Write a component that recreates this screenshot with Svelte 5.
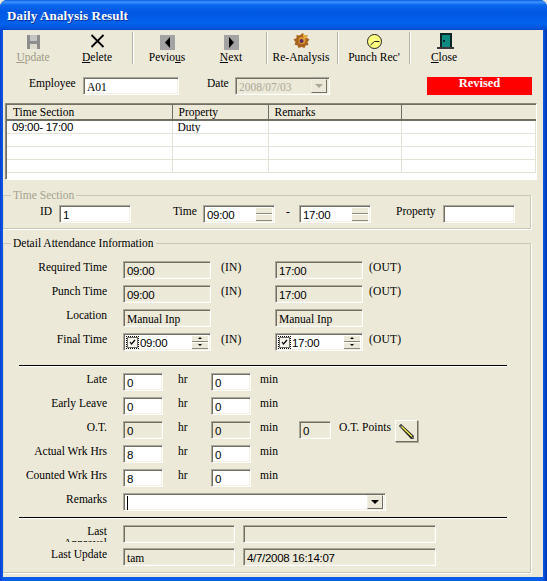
<script>
  const tools = [
    { id: 'save', pre: '', key: 'U', post: 'pdate', off: true },
    { id: 'x', pre: '', key: 'D', post: 'elete' },
    { sep: true },
    { id: 'prev', pre: 'Pevio', key: 'u', post: 's' },
    { id: 'next', pre: '', key: 'N', post: 'ext' },
    { sep: true },
    { id: 'gear', pre: 'Re-Analysis', key: '', post: '' },
    { sep: true, wide: true },
    { id: 'clock', pre: "Punch Rec'", key: '', post: '' },
    { sep: true },
    { id: 'door', pre: '', key: 'C', post: 'lose' }
  ];

  const timeRows = [
    { label: 'Required Time', a: '09:00', b: '17:00', tags: true },
    { label: 'Punch Time', a: '09:00', b: '17:00', tags: true },
    { label: 'Location', a: 'Manual Inp', b: 'Manual Inp', tags: false }
  ];

  const hourRows = [
    { label: 'Late', hr: '0', min: '0' },
    { label: 'Early Leave', hr: '0', min: '0' },
    { label: 'O.T.', hr: '0', min: '0', off: true },
    { label: 'Actual Wrk Hrs', hr: '8', min: '0' },
    { label: 'Counted Wrk Hrs', hr: '8', min: '0' }
  ];
</script>

<div class="window">
  <div class="title">Daily Analysis Result</div>

  <div class="client">
    <div class="toolbar">
      {#each tools as t}
        {#if t.sep}
          <div class="tsep" class:wide={t.wide}></div>
        {:else}
          <div class="tool" class:off={t.off}>
            <svg width="20" height="18" viewBox="0 0 20 18">
              {#if t.id === 'save'}
                <path d="M4 3h13v14H4z" fill="#8e8e8e" />
                <path d="M7 3h7v6H7z" fill="#c4c4c4" />
                <path d="M7 12h7v5H7z" fill="#dedcd0" />
              {:else if t.id === 'x'}
                <path d="M4.500 3l12 12M16.500 3l-12 12" stroke="#000" stroke-width="1.800" fill="none" />
              {:else if t.id === 'prev'}
                <path d="M3 3h15v15H3z" fill="#a3a3a3" />
                <path d="M13 5v11L8 10.500z" fill="#000" />
              {:else if t.id === 'next'}
                <path d="M3 3h15v15H3z" fill="#a3a3a3" />
                <path d="M8 5v11l5-5.500z" fill="#000" />
              {:else if t.id === 'gear'}
                <path d="M12 1l1.500 2.500 3-.5-.5 3 2.500 1.500-2 2.500 1 3-3 .5-1 2.500-3-1-3 1-1-2.500-3-1 1-2.500-2-2.500 3-1.500 0-3 3 .5z" fill="#a8641e" />
                <path d="M12 1l1.500 2.500 3-.5-.5 3-2.500 1-1.500-3z" fill="#e8b040" />
                <circle cx="11" cy="8.500" r="3.500" fill="#e09a30" />
                <circle cx="10.500" cy="9" r="2" fill="#5a2a68" />
              {:else if t.id === 'clock'}
                <circle cx="10.500" cy="9.500" r="7" fill="#ffff80" stroke="#222" />
                <path d="M6.500 13l4-3.500h5" fill="none" stroke="#222" />
              {:else}
                <path d="M6 1h12v14H6z" fill="#0b2426" />
                <path d="M8 3h8v12H8z" fill="#0f8a80" />
                <path d="M3 15h17v2H3z" fill="#3a3a3a" />
                <path d="M9 8h2v2H9z" fill="#06302e" />
              {/if}
            </svg>
            <span>{t.pre}{#if t.key}<u>{t.key}</u>{/if}{t.post}</span>
          </div>
        {/if}
      {/each}
    </div>

    <div class="head">
      <span class="emp-label">Employee</span>
      <div class="field w96 white">A01</div>
      <span class="date-label">Date</span>
      <div class="field combo w95 gray-text">
        <span class="grow">2008/07/03</span>
        <span class="drop off"><i></i></span>
      </div>
      <div class="revised">Revised</div>
    </div>

    <div class="grid">
      <table>
        <colgroup><col style="width:165px" /><col style="width:96px" /><col style="width:133px" /><col /></colgroup>
        <thead>
          <tr><th>Time Section</th><th>Property</th><th>Remarks</th><th></th></tr>
        </thead>
        <tbody>
          <tr><td class="num">09:00- 17:00</td><td>Duty</td><td></td><td></td></tr>
          <tr><td></td><td></td><td></td><td></td></tr>
          <tr><td></td><td></td><td></td><td></td></tr>
          <tr><td></td><td></td><td></td><td></td></tr>
        </tbody>
      </table>
    </div>

    <div class="group section">
      <span class="legend muted">Time Section</span>
      <div class="row">
        <span class="id-label">ID</span>
        <div class="field w72 white num">1</div>
        <span class="time-label">Time</span>
        <div class="field spin w72 white num">
          <span class="grow">09:00</span>
          <span class="spins flat"><b></b><b></b></span>
        </div>
        <span class="dash">-</span>
        <div class="field spin w72 white num">
          <span class="grow">17:00</span>
          <span class="spins flat"><b></b><b></b></span>
        </div>
        <span class="prop-label">Property</span>
        <div class="field w72 white"></div>
      </div>
    </div>

    <div class="group detail">
      <span class="legend">Detail Attendance Information</span>

      {#each timeRows as r}
        <div class="row">
          <span class="lbl">{r.label}</span>
          <div class="field w88" class:num={r.tags}>{r.a}</div>
          <span class="tag-in">{r.tags ? '(IN)' : ''}</span>
          <div class="field w88" class:num={r.tags}>{r.b}</div>
          <span class="tag-out">{r.tags ? '(OUT)' : ''}</span>
        </div>
      {/each}

      <div class="row">
        <span class="lbl">Final Time</span>
        <div class="field spin w88 white num">
          <span class="check"><svg width="9" height="9" viewBox="0 0 9 9"><path d="M2 4l1.500 2 3.500-4" fill="none" stroke="#000" stroke-width="1.200" /></svg></span>
          <span class="grow">09:00</span>
          <span class="spins"><b class="up"></b><b class="down"></b></span>
        </div>
        <span class="tag-in">(IN)</span>
        <div class="field spin w88 white num">
          <span class="check"><svg width="9" height="9" viewBox="0 0 9 9"><path d="M2 4l1.500 2 3.500-4" fill="none" stroke="#000" stroke-width="1.200" /></svg></span>
          <span class="grow">17:00</span>
          <span class="spins"><b class="up"></b><b class="down"></b></span>
        </div>
        <span class="tag-out">(OUT)</span>
      </div>

      <div class="rule first"></div>

      {#each hourRows as r}
        <div class="row">
          <span class="lbl">{r.label}</span>
          <div class="field w40 num" class:white={!r.off}>{r.hr}</div>
          <span class="unit-hr">hr</span>
          <div class="field w40 num" class:white={!r.off}>{r.min}</div>
          <span class="unit-min">min</span>
          {#if r.off}
            <div class="field w32 num">0</div>
            <span class="points">O.T. Points</span>
            <div class="pencil">
              <svg width="19" height="19" viewBox="0 0 19 19">
                <path d="M2 4l2-2 13 12 0 3-3 0z" fill="#222" />
                <path d="M3.500 4.500l1-1 11 10.500-1 1z" fill="#f4ea50" />
                <path d="M14.500 16l2-2 .5 3z" fill="#8c8c8c" />
                <path d="M2 4l2-2 1.500 1.500-2 2z" fill="#555" />
              </svg>
            </div>
          {/if}
        </div>
      {/each}

      <div class="row">
        <span class="lbl">Remarks</span>
        <div class="field combo w263 white">
          <span class="grow caret"></span>
          <span class="drop"><i></i></span>
        </div>
      </div>

      <div class="rule"></div>

      <div class="row short">
        <span class="lbl clip">Last<br />Approval</span>
        <div class="field w112"></div>
        <div class="field w193"></div>
      </div>
      <div class="row">
        <span class="lbl">Last Update</span>
        <div class="field w112">tam</div>
        <div class="field w193 num">4/7/2008 16:14:07</div>
      </div>
    </div>
  </div>
</div>

<style>
  :global(body) {
    margin: 0;
    background: #ece9d8;
  }

  .window {
    width: 547px;
    height: 581px;
    display: flex;
    flex-direction: column;
    overflow: hidden;
    font: 11.500px/14px "Liberation Serif", serif;
    color: #000;
    background: linear-gradient(90deg, #0a3fd0 0, #0a5be6 3px, #0a5be6 543px, #0035b0 547px);
    border-radius: 7px 7px 0 0;
  }

  .title {
    height: 30px;
    flex: none;
    box-sizing: border-box;
    padding: 9px 0 0 7px;
    font-weight: bold;
    font-size: 13px;
    letter-spacing: 0.150px;
    color: #fff;
    text-shadow: 1px 1px 0 #0a2f9c;
    background: linear-gradient(180deg, #0a5ae0 0, #3d95ff 2px, #0a66ee 5px, #0058e4 12px, #0462ec 24px, #0050d8 29px, #003fc0 30px);
  }

  .client {
    flex: 1;
    margin: 0 4px 4px 3px;
    background: #ece9d8;
    min-height: 0;
  }

  .toolbar {
    display: flex;
    height: 36px;
    margin: 2px 0 0 -2px;
  }

  .tool {
    width: 64px;
    flex: none;
    display: flex;
    flex-direction: column;
    align-items: center;
  }

  .tool span {
    line-height: 14px;
    white-space: nowrap;
  }

  .tool.off span {
    color: #9d9a88;
  }

  .tsep {
    width: 1px;
    height: 32px;
    flex: none;
    margin: 0 1px 0 3px;
    background: #b5b2a4;
    border-right: 1px solid #fff;
  }

  .tsep.wide {
    margin: 0 3px 0 4px;
  }

  .head {
    display: flex;
    margin: 9px 0 0 0;
    height: 18px;
  }

  .emp-label {
    margin: -1px 0 0 26px;
    width: 54px;
  }

  .date-label {
    margin: -1px 0 0 28px;
    width: 28px;
  }

  .revised {
    margin-left: 97px;
    width: 105px;
    height: 18px;
    background: #ff0000;
    color: #fff;
    font-weight: bold;
    font-size: 12.500px;
    text-align: center;
    line-height: 13px;
  }

  .field {
    box-sizing: border-box;
    height: 18px;
    flex: none;
    display: flex;
    align-items: center;
    padding: 2px 2px 0 3px;
    border: 1px solid;
    border-color: #aca899 #fff #fff #aca899;
    box-shadow: inset 1px 1px 0 #716f64, inset -1px -1px 0 #f1efe2;
    white-space: nowrap;
    overflow: hidden;
    line-height: 13px;
  }

  .white { background: #fff; }
  .gray-text { color: #aca899; }
  .num { font-family: "Liberation Sans", sans-serif; font-size: 11.500px; letter-spacing: -0.300px; }
  .grow { flex: 1; min-width: 0; }

  .w32 { width: 32px; }
  .w40 { width: 40px; }
  .w72 { width: 72px; }
  .w88 { width: 88px; }
  .w95 { width: 95px; }
  .w96 { width: 96px; }
  .w112 { width: 112px; }
  .w193 { width: 193px; margin-left: 8px; }
  .w263 { width: 263px; }

  .combo,
  .spin {
    padding-top: 0;
    padding-right: 2px;
  }

  .combo .grow,
  .spin .grow {
    padding-top: 2px;
  }

  .drop {
    width: 16px;
    height: 14px;
    flex: none;
    display: flex;
    align-items: center;
    justify-content: center;
    background: #ece9d8;
    border: 1px solid;
    border-color: #f1efe2 #716f64 #716f64 #f1efe2;
    box-sizing: border-box;
  }

  .drop i {
    width: 0;
    height: 0;
    border: 4px solid transparent;
    border-top-color: #000;
    border-bottom: 0;
  }

  .drop.off i {
    border-top-color: #aca899;
  }

  .caret {
    height: 12px;
    margin-top: 1px;
    padding: 0;
    background: linear-gradient(90deg, #000 1px, transparent 1px);
  }

  .grid {
    box-sizing: border-box;
    width: 532px;
    height: 77px;
    margin: 8px 0 0 2px;
    background: #fff;
    border: 1px solid;
    border-color: #8a8878 #fff #fff #8a8878;
    box-shadow: inset 1px 1px 0 #716f64;
    padding: 1px 0 0 1px;
    overflow: hidden;
  }

  table {
    width: 100%;
    table-layout: fixed;
    border-collapse: collapse;
  }

  th {
    height: 15px;
    padding: 0 0 0 6px;
    font-weight: normal;
    text-align: left;
    line-height: 13px;
    background: #ece9d8;
    border-right: 1px solid #716f64;
    border-bottom: 2px solid #716f64;
    box-sizing: border-box;
  }

  th:last-child {
    border-right: 0;
  }

  td {
    height: 13px;
    padding: 0 0 0 5px;
    line-height: 12px;
    border-right: 1px solid #e4e2d6;
    border-bottom: 1px solid #e4e2d6;
    box-sizing: border-box;
    overflow: hidden;
    white-space: nowrap;
  }

  .group {
    position: relative;
    box-sizing: border-box;
    width: 528px;
    border: 1px solid #c8c6b4;
    border-left-color: #d8d6c6;
    box-shadow: 1px 1px 0 #fff;
  }

  .section {
    height: 34px;
    margin-top: 15px;
    padding-top: 9px;
  }

  .detail {
    height: 330px;
    margin-top: 14px;
    padding-top: 17px;
    display: flex;
    flex-direction: column;
    gap: 6px;
  }

  .legend {
    position: absolute;
    top: -8px;
    left: 7px;
    padding: 0 2px;
    background: #ece9d8;
    white-space: nowrap;
  }

  .muted {
    color: #a5a28f;
  }

  .row {
    display: flex;
    height: 18px;
    flex: none;
  }

  .row > span {
    margin-top: -1px;
    white-space: nowrap;
  }

  .row.short {
    height: 17px;
  }

  .id-label { margin-left: 36px; width: 19px; }
  .time-label { margin-left: 42px; width: 30px; }
  .dash { margin-left: 11px; width: 13px; }
  .prop-label { margin-left: 25px; width: 47px; }

  .lbl {
    width: 103px;
    margin-right: 16px;
    text-align: right;
  }

  .row > .clip {
    height: 17px;
    line-height: 12px;
    overflow: hidden;
    margin-top: 0;
  }

  .tag-in { margin-left: 10px; width: 54px; letter-spacing: 0.200px; }
  .tag-out { margin-left: 6px; letter-spacing: 0.200px; }
  .unit-hr { margin-left: 15px; width: 33px; }
  .unit-min { margin-left: 9px; width: 39px; }
  .points { margin-left: 8px; width: 53px; }

  .rule {
    height: 1px;
    width: 488px;
    margin: 0 0 1px 15px;
    background: #000;
    box-shadow: 0 1px 0 #fff;
    flex: none;
  }

  .rule.first {
    margin-top: 8px;
  }

  .check {
    flex: none;
    box-sizing: border-box;
    width: 11px;
    height: 11px;
    margin: 0 2px 0 0;
    display: flex;
    align-items: center;
    justify-content: center;
    background: #f4f3ea;
    border: 1px solid #716f64;
    outline: 1px dotted #000;
  }

  .spins {
    width: 16px;
    height: 14px;
    flex: none;
    display: flex;
    flex-direction: column;
  }

  .spins b {
    flex: 1;
    background: #ece9d8;
    border-top: 1px solid #fff;
    border-bottom: 1px solid #8a8878;
    position: relative;
  }

  .spins .up::after,
  .spins .down::after {
    content: '';
    position: absolute;
    left: 6px;
    top: 1px;
    border: 2px solid transparent;
    border-top: 0;
    border-bottom-color: #000;
  }

  .spins .down::after {
    border-bottom: 0;
    border-top: 2px solid #000;
  }

  .pencil {
    flex: none;
    width: 23px;
    height: 22px;
    margin: -1px 0 0 3px;
    box-sizing: border-box;
    display: flex;
    align-items: center;
    justify-content: center;
    background: #ece9d8;
    border: 1px solid;
    border-color: #fff #716f64 #716f64 #fff;
    box-shadow: 1px 1px 0 #aca899;
  }
</style>
